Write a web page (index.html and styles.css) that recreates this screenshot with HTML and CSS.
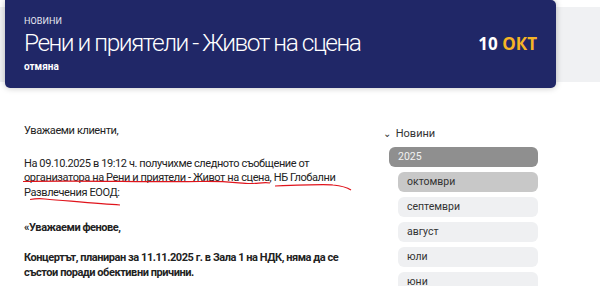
FILE: index.html
```html
<!DOCTYPE html>
<html lang="bg">
<head>
  <meta charset="UTF-8">
  <title>Рени и приятели - Живот на сцена</title>
  <link rel="stylesheet" href="styles.css">
</head>
<body>
  <div class="top">
    <div class="hero">
      <div class="hero-text">
        <div class="kicker">НОВИНИ</div>
        <h1>Рени и приятели - Живот на сцена</h1>
        <div class="status">отмяна</div>
      </div>
      <div class="date">10 <span>ОКТ</span></div>
    </div>
  </div>

  <div class="page">
    <div class="article">
      <p>Уважаеми клиенти,</p>
      <p>На 09.10.2025 в 19:12 ч. получихме следното съобщение от организатора на Рени и приятели - Живот на сцена, НБ Глобални Развлечения ЕООД:</p>
      <p class="fans"><strong>«Уважаеми фенове,</strong></p>
      <p><strong>Концертът, планиран за 11.11.2025 г. в Зала 1 на НДК, няма да се състои поради обективни причини.</strong></p>
      <!-- ръчни подчертавания от скрийншота -->
      <svg class="marks" width="360" height="120" viewBox="0 0 360 120">
        <path d="M23 57.5 C80 56 150 58.5 200 57.5 C230 57 240 59.5 250 59.5 C258 59.5 264 58 270 59" />
        <path d="M275 62 C300 61 325 60 333 61 C343 62 348 64 351 66" />
        <path d="M30 75.5 C36 74.5 40 74.5 45 75 C70 77 100 80 120 81" />
      </svg>
    </div>

    <div class="side">
      <div class="side-title"><span class="chev">⌄</span> Новини</div>
      <div class="year">2025</div>
      <ul class="months">
        <li class="active">октомври</li>
        <li>септември</li>
        <li>август</li>
        <li>юли</li>
        <li>юни</li>
      </ul>
    </div>
  </div>
</body>
</html>
```

FILE: styles.css
```css
body { margin: 0; font-family: Roboto, "Noto Sans", sans-serif; color: #222; background: #fff; }

.top { background: linear-gradient(to bottom, transparent 7px, #f0f1f3 7px, #f0f1f3 82px, transparent 82px); }
.hero { width: 551px; height: 88px; margin-left: 5px; box-sizing: border-box; padding: 0 19px; background: #202767; border-radius: 0 5px 5px 5px; box-shadow: 0 0 6px rgba(0,0,0,.25); display: flex; align-items: center; justify-content: space-between; color: #fff; }
.kicker { font-size: 9px; letter-spacing: .1px; color: #e8e9f2; }
.hero h1 { margin: 2px 0 3px; font-size: 24.5px; font-weight: 300; line-height: 30px; letter-spacing: -1.5px; }
.status { font-size: 10px; font-weight: 700; }
.date { font-family: "Open Sans", sans-serif; font-size: 17px; font-weight: 700; margin-top: -2px; }
.date span { color: #f6b425; }

.page { display: flex; padding: 36px 0 0 24px; }
.article { width: 332px; position: relative; font-size: 11px; line-height: 14.5px; letter-spacing: -0.4px; }
.article p { margin: 0 0 18px; }
.article p.fans { margin: 20px 0 14px; }
.article strong { letter-spacing: -0.45px; line-height: 15.5px; }
.marks { position: absolute; left: -24px; top: 0; pointer-events: none; }
.marks path { fill: none; stroke: #e0141c; stroke-width: 1.2; }

.side { margin-left: 27px; width: 155px; font-size: 10.5px; padding-top: 3px; }
.side-title { font-size: 11px; color: #333; height: 15px; margin-bottom: 5px; }
.chev { font-size: 10px; margin-right: 2px; }
.year { background: #8f8f8f; color: #f2f2f2; border-radius: 6px; padding: 0 9px; height: 20px; line-height: 20px; margin-left: 6px; }
.months { list-style: none; margin: 5px 0 0 15px; padding: 0; }
.months li { background: #eff0f2; border-radius: 6px; padding: 0 9px; height: 20px; line-height: 20px; margin-bottom: 5px; color: #333; }
.months li.active { background: #c8c8c8; }
```
